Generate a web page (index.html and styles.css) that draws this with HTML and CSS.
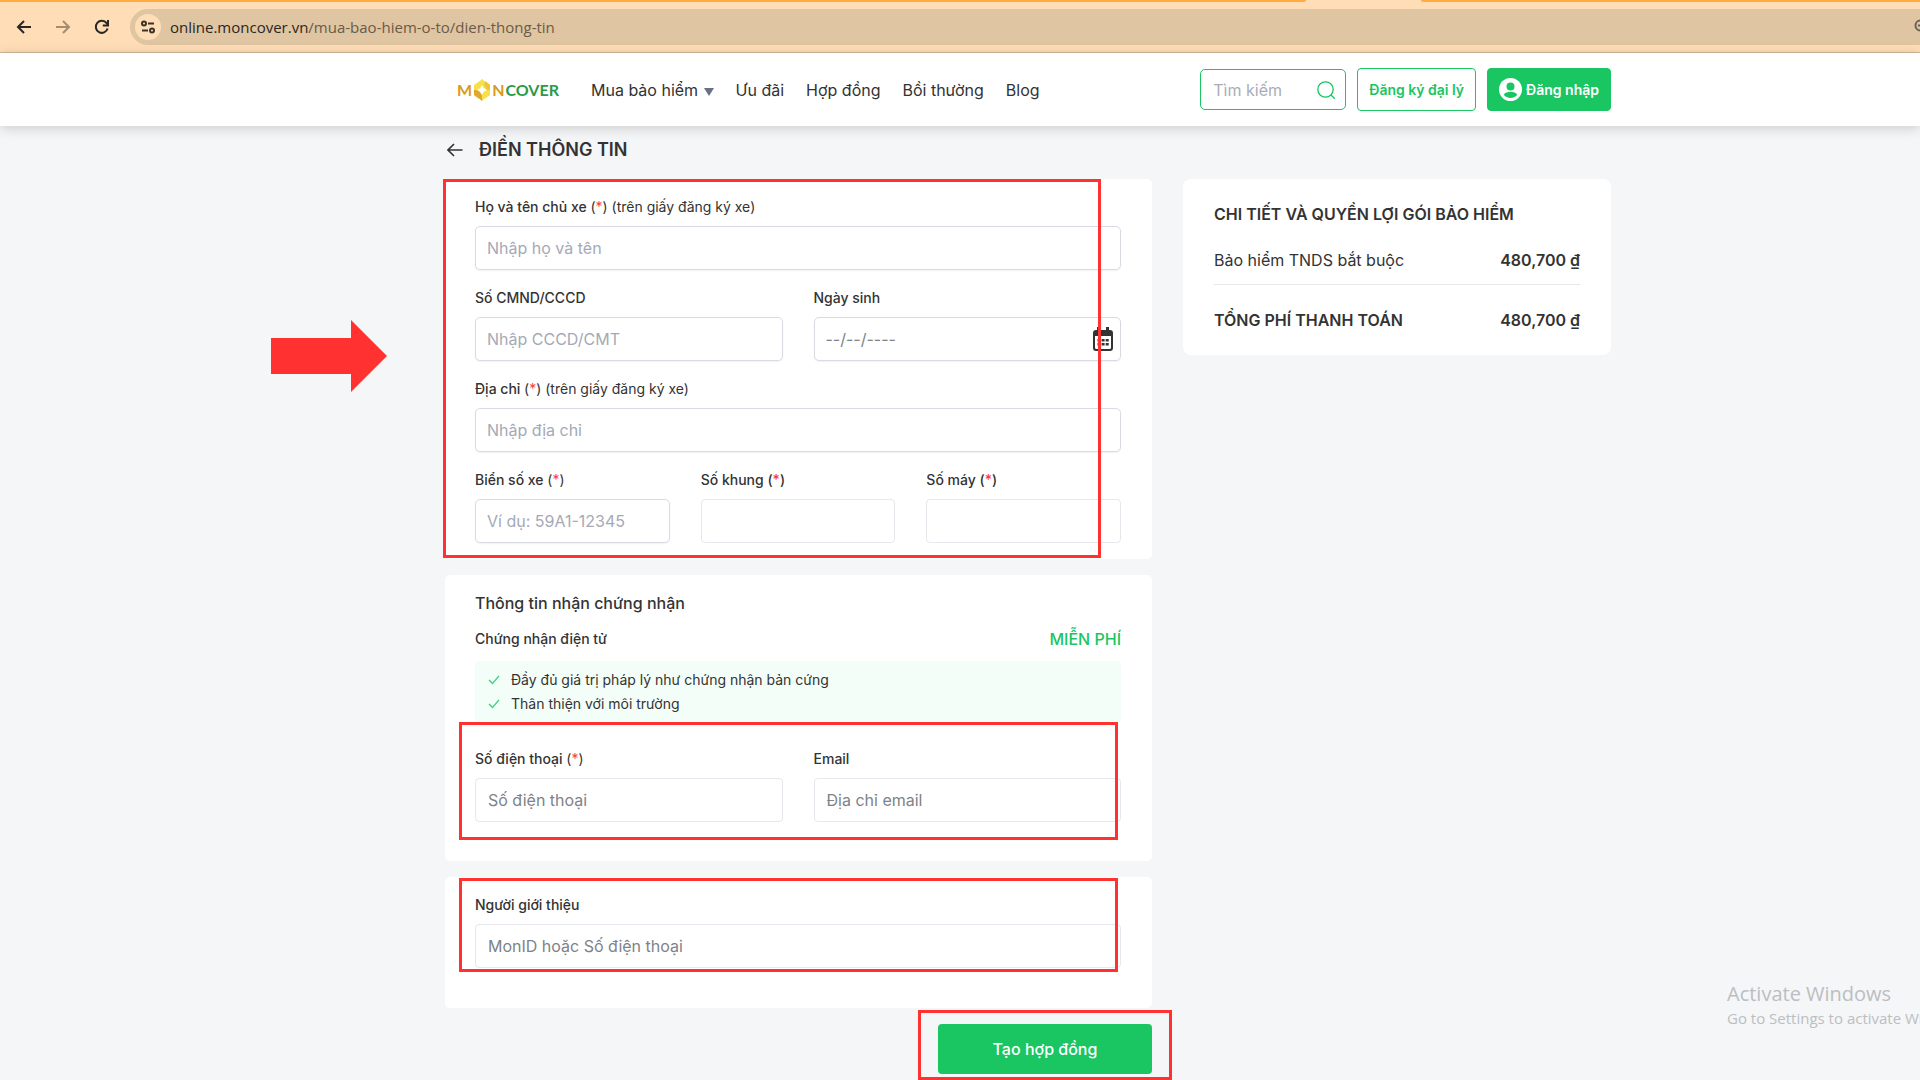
FILE: index.html
```html
<!DOCTYPE html>
<html lang="vi">
<head>
<meta charset="utf-8">
<meta name="viewport" content="width=device-width, initial-scale=1">
<title>Điền thông tin - Moncover</title>
<link rel="stylesheet" href="styles.css">
</head>
<body>
<div class="screen">
  <div class="browser">
    <div class="tab-strip"><span class="tab-edge tab-edge-left"></span><span class="tab-edge tab-edge-right"></span></div>
    <div class="toolbar">
      <button class="tool" type="button" aria-label="Back">
        <svg width="16" height="16" viewBox="0 0 16 16" fill="none" stroke="#2b2723" stroke-width="2"><path d="M15 8H2M8 2L2 8l6 6"/></svg>
      </button>
      <button class="tool" type="button" aria-label="Forward">
        <svg width="16" height="16" viewBox="0 0 16 16" fill="none" stroke="#a48c70" stroke-width="2"><path d="M1 8h13M8 2l6 6-6 6"/></svg>
      </button>
      <button class="tool" type="button" aria-label="Reload">
        <svg width="16" height="16" viewBox="0 0 16 16" fill="none" stroke="#2b2723" stroke-width="2"><path d="M13.6 9.5A6 6 0 1 1 12.6 4.2L14 6"/><path d="M14 1v5.5H8.800"/></svg>
      </button>
      <div class="address">
        <span class="site-info">
          <svg width="16" height="16" viewBox="0 0 16 16" fill="none" stroke="#3a332b" stroke-width="2"><circle cx="4" cy="4.500" r="2"/><path d="M8 4.500h6M2 11.500h6"/><circle cx="12" cy="11.500" r="2"/></svg>
        </span>
        <span class="url"><span class="host">online.moncover.vn</span>/mua-bao-hiem-o-to/dien-thong-tin</span>
        <svg class="zoom-icon" width="16" height="16" viewBox="0 0 16 16" fill="none" stroke="#6b6257" stroke-width="2"><circle cx="6.500" cy="6.500" r="5"/><path d="M4 6.500h5M10.500 10.500L15 15"/></svg>
      </div>
    </div>
  </div>

  <header class="site-header">
    <a class="logo" href="#" aria-label="Moncover">
      <span class="logo-gold">M</span>
      <svg width="18" height="22" viewBox="0 0 18 22"><path d="M9 0C12 3 15 4 17 6v10c-2 2-5 3-8 6-3-3-6-4-8-6V6c2-2 5-3 8-6z" fill="#f8e04a"/><path d="M1 11v5c2 2 5 3 8 6v-6l-4-5z" fill="#e0a92c"/><path d="M17 11V6c-2-2-3-2.500-5-4l-1 4 3 5z" fill="#ecc636"/><path d="M9 6l1.800 3.200L14 11l-3.200 1.800L9 16l-1.800-3.200L4 11l3.200-1.800z" fill="#fff"/></svg>
      <span class="logo-gold">N</span><span class="logo-green">COVER</span>
    </a>
    <nav class="nav">
      <a href="#">Mua bảo hiểm <svg class="caret" width="10" height="8" viewBox="0 0 10 8"><path d="M0 0h10L5 8z" fill="#687083"/></svg></a>
      <a href="#">Ưu đãi</a>
      <a href="#">Hợp đồng</a>
      <a href="#">Bồi thường</a>
      <a href="#">Blog</a>
    </nav>
    <div class="actions">
      <label class="search">
        <input type="search" placeholder="Tìm kiếm" aria-label="Tìm kiếm">
        <svg width="18" height="18" viewBox="0 0 18 18" fill="none" stroke="#19c661" stroke-width="1.300"><circle cx="8.500" cy="8.500" r="7.700"/><path d="M14 14l3.700 3.700"/></svg>
      </label>
      <button class="btn btn-outline" type="button">Đăng ký đại lý</button>
      <button class="btn btn-solid" type="button">
        <svg width="23" height="23" viewBox="0 0 23 23"><circle cx="11.500" cy="11.500" r="11.500" fill="#fff"/><circle cx="11.500" cy="8.500" r="4" fill="#19c661"/><path d="M4.800 16.700c1.200-2.200 3.700-3 6.700-3s5.500.8 6.700 3a8.500 8.500 0 0 1-13.400 0z" fill="#19c661"/></svg>
        Đăng nhập
      </button>
    </div>
  </header>

  <main class="page">
    <div class="page-title">
      <a class="back" href="#" aria-label="Quay lại"><svg width="16" height="14" viewBox="0 0 16 14" fill="none" stroke="#333" stroke-width="1.600"><path d="M15.500 7H1.500M7 1L1 7l6 6"/></svg></a>
      <h1>ĐIỀN THÔNG TIN</h1>
    </div>

    <div class="columns">
      <form class="form">
        <section class="card owner">
          <div class="field">
            <label for="name">Họ và tên chủ xe <span class="light">(<i>*</i>) (trên giấy đăng ký xe)</span></label>
            <input id="name" type="text" placeholder="Nhập họ và tên">
          </div>
          <div class="row">
            <div class="field">
              <label for="cccd">Số CMND/CCCD</label>
              <input id="cccd" type="text" placeholder="Nhập CCCD/CMT">
            </div>
            <div class="field">
              <label for="dob">Ngày sinh</label>
              <div class="date">
                <input id="dob" class="dob" type="text" placeholder="--/--/----">
                <svg class="calendar" width="20" height="24" viewBox="0 0 20 24"><path d="M3 3h14a3 3 0 0 1 3 3v15a3 3 0 0 1-3 3H3a3 3 0 0 1-3-3V6a3 3 0 0 1 3-3zM2 9v11.500A1.500 1.500 0 0 0 3.500 22h13a1.500 1.500 0 0 0 1.500-1.500V9z" fill="#333" fill-rule="evenodd"/><path d="M4 0h3v5H4zM13 0h3v5h-3zM4.500 12h3v2.500h-3zM8.600 12h3v2.500h-3zM12.700 12h3v2.500h-3zM4.500 16h3v2.500h-3zM8.600 16h3v2.500h-3zM12.700 16h3v2.500h-3z" fill="#333"/></svg>
              </div>
            </div>
          </div>
          <div class="field">
            <label for="address">Địa chỉ <span class="light">(<i>*</i>) (trên giấy đăng ký xe)</span></label>
            <input id="address" type="text" placeholder="Nhập địa chỉ">
          </div>
          <div class="row">
            <div class="field">
              <label for="plate">Biển số xe <span class="light">(<i>*</i>)</span></label>
              <input id="plate" type="text" placeholder="Ví dụ: 59A1-12345">
            </div>
            <div class="field">
              <label for="frame">Số khung (<i>*</i>)</label>
              <input id="frame" class="flat" type="text">
            </div>
            <div class="field">
              <label for="engine">Số máy (<i>*</i>)</label>
              <input id="engine" class="flat" type="text">
            </div>
          </div>
          <div class="mark mark-owner"></div>
          <svg class="pointer" width="116" height="72" viewBox="0 0 116 72"><path d="M0 18h80V0l36 36-36 36V54H0z" fill="#ff3131"/></svg>
        </section>

        <section class="card contact">
          <h2>Thông tin nhận chứng nhận</h2>
          <div class="cert"><span>Chứng nhận điện tử</span><strong>MIỄN PHÍ</strong></div>
          <ul class="benefits">
            <li><svg width="12" height="10" viewBox="0 0 12 10" fill="none" stroke="#42d080" stroke-width="1.300"><path d="M1 5l3.500 3.500L11 1"/></svg>Đầy đủ giá trị pháp lý như chứng nhận bản cứng</li>
            <li><svg width="12" height="10" viewBox="0 0 12 10" fill="none" stroke="#42d080" stroke-width="1.300"><path d="M1 5l3.500 3.500L11 1"/></svg>Thân thiện với môi trường</li>
          </ul>
          <div class="row">
            <div class="field">
              <label for="phone">Số điện thoại <span class="light">(<i>*</i>)</span></label>
              <input id="phone" class="flat" type="tel" placeholder="Số điện thoại">
            </div>
            <div class="field">
              <label for="email">Email</label>
              <input id="email" class="flat" type="email" placeholder="Địa chỉ email">
            </div>
          </div>
          <div class="mark mark-contact"></div>
        </section>

        <section class="card referrer">
          <div class="field">
            <label for="ref">Người giới thiệu</label>
            <input id="ref" class="flat" type="text" placeholder="MonID hoặc Số điện thoại">
          </div>
          <div class="mark mark-referrer"></div>
        </section>

        <div class="submit">
          <button type="submit">Tạo hợp đồng</button>
          <div class="mark mark-submit"></div>
        </div>
      </form>

      <aside class="card summary">
        <h2>CHI TIẾT VÀ QUYỀN LỢI GÓI BẢO HIỂM</h2>
        <dl>
          <div class="item"><dt>Bảo hiểm TNDS bắt buộc</dt><dd>480,700 ₫</dd></div>
          <div class="item total"><dt>TỔNG PHÍ THANH TOÁN</dt><dd>480,700 ₫</dd></div>
        </dl>
      </aside>
    </div>
  </main>

  <div class="watermark">
    <p class="wm-title">Activate Windows</p>
    <p class="wm-text">Go to Settings to activate Windows.</p>
  </div>
</div>
</body>
</html>
```

FILE: styles.css
```css
* { box-sizing: border-box; }

body {
  margin: 0;
  background: #f4f6f8;
  color: #333;
  font: 16px/20px Inter, "Noto Sans", sans-serif;
}

h1, h2, p, ul, dl, dd { margin: 0; padding: 0; }
a { color: inherit; text-decoration: none; }
button, input { font: inherit; color: inherit; }
button { cursor: pointer; }
i { font-style: normal; color: #ff3b3b; }

.screen {
  position: relative;
  min-height: 100vh;
  overflow: hidden;
}

/* Browser chrome */
.browser {
  background: #ffdeb7;
  border-bottom: 1px solid #d5b795;
}

.tab-strip {
  display: flex;
  justify-content: space-between;
  height: 2px;
}

.tab-edge { background: #ffab40; }
.tab-edge-left { width: 68%; border-bottom-right-radius: 4px; }
.tab-edge-right { width: 26%; border-bottom-left-radius: 4px; }

.toolbar {
  display: flex;
  align-items: center;
  height: 50px;
  padding-left: 16px;
}

.tool {
  display: flex;
  width: 16px;
  margin-right: 23px;
  padding: 0;
  border: 0;
  background: none;
}

.address {
  display: flex;
  flex: 1;
  align-items: center;
  height: 36px;
  margin-left: -3px;
  padding-left: 5px;
  border-radius: 18px 0 0 18px;
  background: #dfc5a1;
}

.site-info {
  display: flex;
  align-items: center;
  justify-content: center;
  width: 26px;
  height: 26px;
  margin-right: 9px;
  border-radius: 50%;
  background: #ffdeb7;
}

.url {
  flex: 1;
  color: #6b5b49;
  font: 15px/20px "Open Sans", "Noto Sans", sans-serif;
}

.host { color: #2b2723; }
.zoom-icon { margin-right: -10px; }

/* Site header */
.site-header {
  position: relative;
  display: flex;
  align-items: center;
  height: 73px;
  padding: 0 309px 0 457px;
  background: #fff;
  box-shadow: 0 2px 12px rgba(0, 0, 0, .18);
}

.logo {
  display: flex;
  align-items: center;
  gap: 1px;
  width: 134px;
  font: bold 16px/22px Lato, sans-serif;
}

.logo-gold { color: #d99a22; }
.logo-green { color: #2a9a48; }

.nav {
  display: flex;
  gap: 22px;
}

.caret { margin-left: 1px; }

.actions {
  display: flex;
  align-items: center;
  gap: 11px;
  margin-left: auto;
}

.search {
  display: flex;
  align-items: center;
  width: 146px;
  height: 41px;
  padding: 0 10px 0 12px;
  border: 1px solid #19c661;
  border-radius: 5px;
}

.search input {
  flex: 1;
  min-width: 0;
  padding: 0;
  border: 0;
  outline: 0;
  background: none;
}

.search input::placeholder { color: #a9adb8; }

.btn {
  display: flex;
  align-items: center;
  justify-content: center;
  gap: 4px;
  height: 43px;
  padding: 0 11px;
  border: 1px solid #19c661;
  border-radius: 4px;
  font-size: 14px;
  font-weight: 600;
  white-space: nowrap;
}

.btn-outline { background: #fff; color: #19c661; }
.btn-solid { background: #19c661; color: #fff; }

/* Page */
.page { padding: 12px 309px 6px 445px; }

.page-title {
  display: flex;
  align-items: center;
  gap: 16px;
  height: 24px;
  margin-bottom: 17px;
  padding-left: 2px;
}

.page-title h1 { font-size: 18px; font-weight: 600; }
.back { display: flex; }

.columns {
  display: grid;
  grid-template-columns: minmax(0, 707fr) minmax(0, 428fr);
  gap: 31px;
  align-items: start;
}

.form {
  display: grid;
  gap: 16px;
}

.card {
  position: relative;
  padding: 18px 31px 40px 30px;
  border-radius: 5px;
  background: #fff;
}

.owner {
  display: grid;
  gap: 18px;
  padding-bottom: 16px;
}

.row {
  display: flex;
  gap: 31px;
}

.field {
  display: grid;
  flex: 1;
  gap: 9px;
  min-width: 0;
}

.field label {
  font-size: 14px;
  font-weight: 500;
}

.light { font-weight: 400; }

.field input {
  width: 100%;
  height: 44px;
  padding: 0 11px;
  border: 1px solid #d9dbe3;
  border-radius: 5px;
  background: #fff;
  box-shadow: 0 1px 2px rgba(0, 0, 0, .06);
}

.field input::placeholder { color: #a6a9b6; opacity: 1; }
.field .flat { padding: 0 12px; border-color: #e7e8ed; border-radius: 4px; box-shadow: none; }
.field .flat::placeholder,
.field .dob::placeholder { color: #7e8388; }

.date { position: relative; }

.calendar {
  position: absolute;
  top: 10px;
  right: 8px;
}

.contact { padding-bottom: 39px; }

.contact h2 {
  font-size: 16px;
  font-weight: 500;
}

.cert {
  display: flex;
  justify-content: space-between;
  margin: 16px 0 12px;
  font-size: 14px;
  font-weight: 500;
}

.cert strong {
  color: #19c661;
  font-size: 16px;
  font-weight: 500;
}

.benefits {
  margin-bottom: 26px;
  padding: 7px 13px;
  border-radius: 4px;
  background: #f3fef8;
  font-size: 14px;
  line-height: 24px;
  list-style: none;
}

.benefits li {
  display: flex;
  align-items: center;
  gap: 11px;
}

.submit {
  position: relative;
  justify-self: end;
}

.submit button {
  display: block;
  width: 214px;
  height: 50px;
  border: 0;
  border-radius: 4px;
  background: #19c661;
  color: #fff;
  font-weight: 500;
}

/* Summary */
.summary {
  padding: 25px 31px;
  border-radius: 8px;
}

.summary h2 {
  font-size: 16px;
  font-weight: 600;
}

.item {
  display: flex;
  justify-content: space-between;
  padding: 26px 0 14px;
}

.item dd { font-weight: 600; }

.total {
  padding: 25px 0 0;
  border-top: 1px solid #e6e8ea;
  font-weight: 600;
}

/* Highlight frames drawn over the form */
.mark {
  position: absolute;
  border: 3px solid #ff3131;
  pointer-events: none;
}

.mark-owner { inset: 0 51px 1px -2px; }
.mark-contact { inset: 147px 34px 21px 14px; }
.mark-referrer { inset: 1px 34px 36px 14px; }
.mark-submit { inset: -14px -20px -6px -20px; }

.pointer {
  position: absolute;
  top: 141px;
  right: 100%;
  margin-right: 58px;
}

.watermark {
  position: absolute;
  top: 980px;
  left: 1727px;
  color: #bcbec1;
  font-family: "Open Sans", "Noto Sans", sans-serif;
  white-space: nowrap;
}

.wm-title { font-size: 20px; line-height: 28px; }
.wm-text { font-size: 15px; line-height: 20px; }
```
